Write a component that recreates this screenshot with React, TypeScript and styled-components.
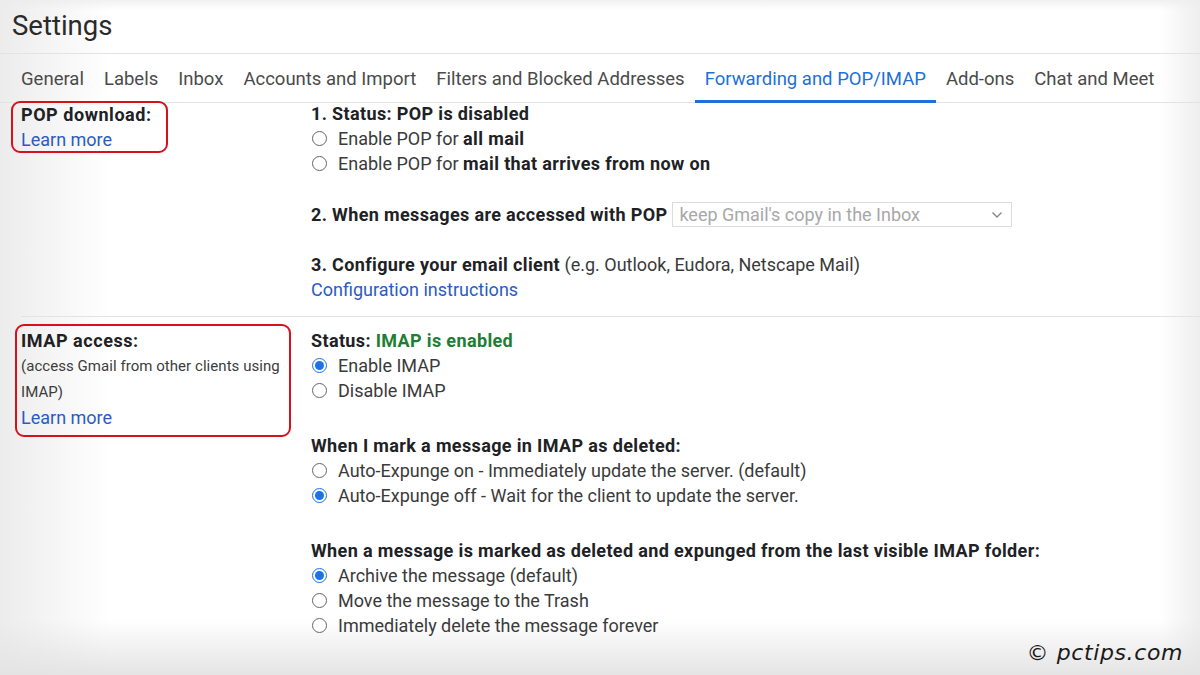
import React from "react";
import styled, { createGlobalStyle } from "styled-components";

const Global = createGlobalStyle`
  html, body { margin: 0; padding: 0; }
  body { font-family: Roboto, "Noto Sans", Arial, sans-serif; color: #202124; }
`;

const Page = styled.div`
  position: relative;
  width: 1200px;
  height: 675px;
  overflow: hidden;
  background:
    linear-gradient(to bottom, rgba(225,225,225,0) 620px, rgba(228,228,228,1) 675px),
    linear-gradient(to right, #ececec 0px, rgba(255,255,255,0) 110px),
    linear-gradient(to left, #eeeeee 0px, rgba(255,255,255,0) 40px),
    linear-gradient(to bottom, #f1f1f1 0px, rgba(255,255,255,0) 10px),
    #ffffff;
`;

const Header = styled.header`
  height: 54px;
  box-sizing: border-box;
  display: flex;
  align-items: center;
  padding: 0 0 2px 12px;
  border-bottom: 1px solid #e3e3e3;
  font-size: 27.5px;
  font-weight: 400;
  color: #2a2a2a;
`;

const Tabs = styled.nav`
  display: flex;
  padding-left: 11px;
  height: 48px;
  border-bottom: 1px solid #e3e3e3;
`;

const Tab = styled.div<{ $active?: boolean }>`
  padding: 4px 10px 0;
  display: flex;
  align-items: center;
  font-size: 18.5px;
  color: ${(p) => (p.$active ? "#1f6fd8" : "#4a4a4a")};
  border-bottom: 3px solid ${(p) => (p.$active ? "#1f6fd8" : "transparent")};
  margin-bottom: -1px;
  white-space: nowrap;
`;

const Section = styled.section<{ $top: number; $bottom: number; $line?: boolean }>`
  display: grid;
  grid-template-columns: 290px 1fr;
  margin-left: 21px;
  padding-top: ${(p) => p.$top}px;
  padding-bottom: ${(p) => p.$bottom}px;
  border-bottom: ${(p) => (p.$line ? "1px solid #e3e3e3" : "none")};
`;

const LabelCol = styled.div<{ $shift?: number }>`
  position: relative;
  display: flex;
  flex-direction: column;
  align-items: flex-start;
  margin-top: ${(p) => p.$shift ?? 0}px;
`;

const Highlight = styled.div<{ $l: number; $t: number; $w: number; $h: number }>`
  position: absolute;
  left: ${(p) => p.$l}px;
  top: ${(p) => p.$t}px;
  width: ${(p) => p.$w}px;
  height: ${(p) => p.$h}px;
  border: 2.5px solid #d8101c;
  border-radius: 9px;
  box-sizing: border-box;
  pointer-events: none;
`;

const LabelTitle = styled.div`
  font-size: 18px;
  font-weight: 700;
  line-height: 25px;
  color: #202124;
  letter-spacing: 0.55px;
`;

const LabelNote = styled.div`
  font-size: 15px;
  line-height: 26px;
  color: #3c3c3c;
  letter-spacing: 0.05px;
`;

const Link = styled.a`
  font-size: 18px;
  line-height: 25px;
  color: #2a5bc4;
  text-decoration: none;
`;

const Content = styled.div<{ $shift?: number }>`
  display: flex;
  flex-direction: column;
  margin-top: ${(p) => p.$shift ?? 0}px;
`;

const Group = styled.div<{ $gap?: number }>`
  display: flex;
  flex-direction: column;
  margin-top: ${(p) => p.$gap ?? 0}px;
`;

const Line = styled.div`
  font-size: 18px;
  line-height: 25px;
  color: #3a3a3a;
  white-space: nowrap;
  display: flex;
  align-items: center;
`;

const Strong = styled.b`
  font-weight: 700;
  color: #202124;
  letter-spacing: 0.36px;
`;

const Green = styled.span`
  color: #1e7e34;
  font-weight: 700;
  letter-spacing: 0.36px;
`;

const RadioRow = styled.label`
  display: flex;
  align-items: center;
  gap: 11px;
  font-size: 18px;
  line-height: 25px;
  color: #3a3a3a;
  white-space: nowrap;
  padding-left: 1px;
`;

const Radio = styled.span<{ $on?: boolean }>`
  width: 15px;
  height: 15px;
  border-radius: 50%;
  box-sizing: border-box;
  border: ${(p) => (p.$on ? "1.5px solid #1a73e8" : "1px solid #666")};
  display: flex;
  align-items: center;
  justify-content: center;
  background: #fff;
  &::after {
    content: "";
    width: 9px;
    height: 9px;
    border-radius: 50%;
    background: ${(p) => (p.$on ? "#1a73e8" : "transparent")};
  }
`;

const Select = styled.div`
  margin-left: 5px;
  width: 340px;
  height: 25px;
  box-sizing: border-box;
  border: 1px solid #dcdcdc;
  display: flex;
  align-items: center;
  justify-content: space-between;
  padding: 0 8px 0 6px;
  font-size: 18px;
  color: #a8a8a8;
  font-weight: 400;
`;

const Watermark = styled.div`
  position: absolute;
  right: 17px;
  bottom: 10px;
  font-family: "DejaVu Sans", sans-serif;
  font-style: italic;
  font-size: 22px;
  color: #1a1a1a;
  letter-spacing: 0.6px;
`;

const Chevron = () => (
  <svg width="12" height="8" viewBox="0 0 12 8">
    <path d="M1.5 1.5 L6 6 L10.5 1.5" fill="none" stroke="#888" strokeWidth="1.4" />
  </svg>
);

export default function App() {
  return (
    <Page>
      <Global />
      <Header>Settings</Header>
      <Tabs>
        <Tab>General</Tab>
        <Tab>Labels</Tab>
        <Tab>Inbox</Tab>
        <Tab>Accounts and Import</Tab>
        <Tab>Filters and Blocked Addresses</Tab>
        <Tab $active>Forwarding and POP/IMAP</Tab>
        <Tab>Add-ons</Tab>
        <Tab>Chat and Meet</Tab>
      </Tabs>

      <Section $top={0} $bottom={14} $line>
        <LabelCol $shift={-1}>
          <Highlight $l={-10} $t={-1} $w={157} $h={52} />
          <LabelTitle>POP download:</LabelTitle>
          <Link>Learn more</Link>
        </LabelCol>
        <Content $shift={-2}>
          <Group>
            <Line>
              <Strong>1. Status: POP is disabled</Strong>
            </Line>
            <RadioRow>
              <Radio />
              <span>
                Enable POP for <Strong>all mail</Strong>
              </span>
            </RadioRow>
            <RadioRow>
              <Radio />
              <span>
                Enable POP for <Strong>mail that arrives from now on</Strong>
              </span>
            </RadioRow>
          </Group>
          <Group $gap={26}>
            <Line>
              <Strong>2. When messages are accessed with POP</Strong>
              <Select>
                <span>keep Gmail's copy in the Inbox</span>
                <Chevron />
              </Select>
            </Line>
          </Group>
          <Group $gap={25}>
            <Line>
              <Strong>3. Configure your email client</Strong>
              &nbsp;<span>(e.g. Outlook, Eudora, Netscape Mail)</span>
            </Line>
            <Link>Configuration instructions</Link>
          </Group>
        </Content>
      </Section>

      <Section $top={11} $bottom={0}>
        <LabelCol>
          <Highlight $l={-6} $t={-4} $w={276} $h={113} />
          <LabelTitle>IMAP access:</LabelTitle>
          <LabelNote>(access Gmail from other clients using IMAP)</LabelNote>
          <Link>Learn more</Link>
        </LabelCol>
        <Content>
          <Group>
            <Line>
              <Strong>Status:&nbsp;</Strong>
              <Green>IMAP is enabled</Green>
            </Line>
            <RadioRow>
              <Radio $on />
              <span>Enable IMAP</span>
            </RadioRow>
            <RadioRow>
              <Radio />
              <span>Disable IMAP</span>
            </RadioRow>
          </Group>
          <Group $gap={30}>
            <Line>
              <Strong>When I mark a message in IMAP as deleted:</Strong>
            </Line>
            <RadioRow>
              <Radio />
              <span>Auto-Expunge on - Immediately update the server. (default)</span>
            </RadioRow>
            <RadioRow>
              <Radio $on />
              <span>Auto-Expunge off - Wait for the client to update the server.</span>
            </RadioRow>
          </Group>
          <Group $gap={30}>
            <Line>
              <Strong>When a message is marked as deleted and expunged from the last visible IMAP folder:</Strong>
            </Line>
            <RadioRow>
              <Radio $on />
              <span>Archive the message (default)</span>
            </RadioRow>
            <RadioRow>
              <Radio />
              <span>Move the message to the Trash</span>
            </RadioRow>
            <RadioRow>
              <Radio />
              <span>Immediately delete the message forever</span>
            </RadioRow>
          </Group>
        </Content>
      </Section>
      <Watermark>© pctips.com</Watermark>
    </Page>
  );
}
